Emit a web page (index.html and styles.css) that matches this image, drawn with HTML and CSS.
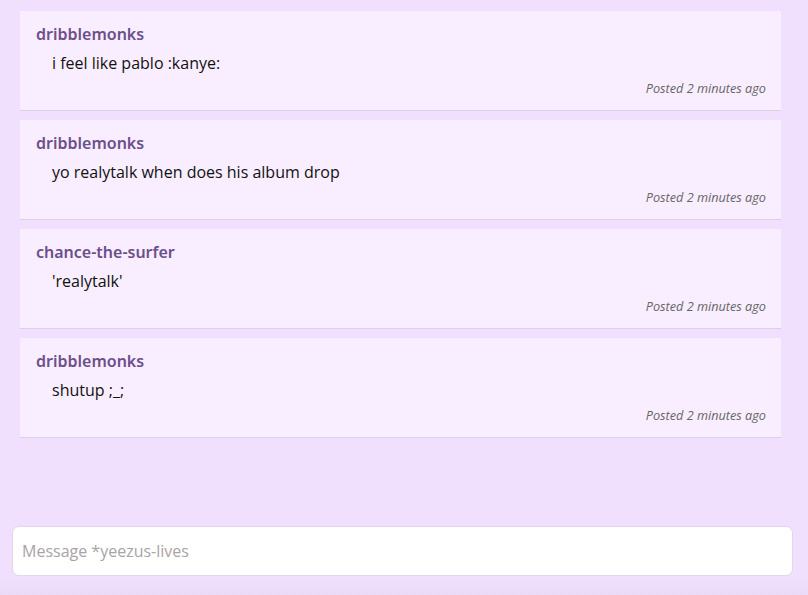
FILE: index.html
```html
<!DOCTYPE html>
<html>
<head>
<meta charset="utf-8">
<link rel="stylesheet" href="styles.css">
</head>
<body>
<div class="app">
  <div class="messages">
    <div class="msg">
      <div class="user">dribblemonks</div>
      <div class="text">i feel like pablo :kanye:</div>
      <div class="time">Posted 2 minutes ago</div>
    </div>
    <div class="msg">
      <div class="user">dribblemonks</div>
      <div class="text">yo realytalk when does his album drop</div>
      <div class="time">Posted 2 minutes ago</div>
    </div>
    <div class="msg">
      <div class="user">chance-the-surfer</div>
      <div class="text">'realytalk'</div>
      <div class="time">Posted 2 minutes ago</div>
    </div>
    <div class="msg">
      <div class="user">dribblemonks</div>
      <div class="text">shutup ;_;</div>
      <div class="time">Posted 2 minutes ago</div>
    </div>
  </div>
  <div class="composer">
    <input class="input" type="text" placeholder="Message *yeezus-lives">
  </div>
</div>
</body>
</html>
```

FILE: styles.css
```css
html, body {
  margin: 0;
  padding: 0;
  height: 100%;
}
body {
  background: #f0dffd;
  font-family: "Open Sans", "Noto Sans", sans-serif;
  overflow: hidden;
}
.app {
  height: 595px;
  display: flex;
  flex-direction: column;
  background: linear-gradient(to bottom, #f0dffd 0, #f0dffd 578px, #eadaf7 595px);
}
.messages {
  flex: 1;
  padding: 11px 27px 0 20px;
  display: flex;
  flex-direction: column;
  gap: 9px;
}
.msg {
  background: #f8eeff;
  border-bottom: 1px solid #dccfe6;
  height: 99px;
  box-sizing: content-box;
  padding: 0 15px 0 16px;
  display: flex;
  flex-direction: column;
}
.user {
  font-family: "Noto Sans", "Open Sans", sans-serif;
  font-weight: 600;
  font-size: 16px;
  color: #6d4f8c;
  margin-top: 13px;
  line-height: 20px;
}
.text {
  font-size: 16px;
  color: #111;
  line-height: 22px;
  margin-top: 8px;
  padding-left: 16px;
}
.time {
  font-size: 12.7px;
  font-style: italic;
  color: #666;
  text-align: right;
  margin-top: 6px;
  line-height: 16px;
}
.composer {
  padding: 0 15px 19px 12px;
}
.input {
  display: block;
  width: 100%;
  box-sizing: border-box;
  height: 50px;
  border: 1px solid #e2d6e8;
  border-radius: 7px;
  background: #fff;
  padding: 0 9px;
  font-family: "Open Sans", "Noto Sans", sans-serif;
  font-size: 16px;
  outline: none;
}
.input::placeholder {
  color: #a9a3a6;
}
```
